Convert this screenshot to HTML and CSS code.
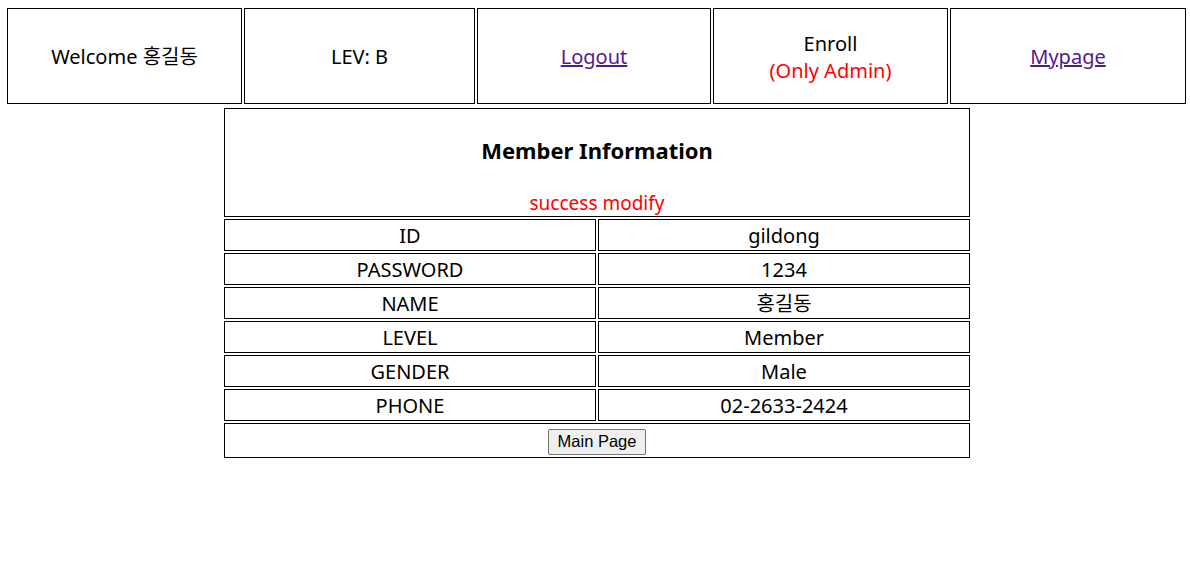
FILE: index.html
```html
<!DOCTYPE html>
<html lang="ko">
<head>
<meta charset="utf-8">
<title>Member Information</title>
<link rel="stylesheet" href="styles.css">
</head>
<body>
<div class="topbar">
  <div class="cell"><span>Welcome 홍길동</span></div>
  <div class="cell"><span>LEV: B</span></div>
  <div class="cell"><a href="#">Logout</a></div>
  <div class="cell stack"><span>Enroll</span><span class="red">(Only Admin)</span></div>
  <div class="cell"><a href="#">Mypage</a></div>
</div>
<div class="info">
  <div class="head">
    <h3 class="title">Member Information</h3>
    <span class="red msg">success modify</span>
  </div>
  <div class="c">ID</div><div class="c">gildong</div>
  <div class="c">PASSWORD</div><div class="c">1234</div>
  <div class="c">NAME</div><div class="c">홍길동</div>
  <div class="c">LEVEL</div><div class="c">Member</div>
  <div class="c">GENDER</div><div class="c">Male</div>
  <div class="c">PHONE</div><div class="c">02-2633-2424</div>
  <div class="foot"><button class="btn" type="button">Main Page</button></div>
</div>
</body>
</html>
```
FILE: styles.css
```css
html, body {
  margin: 0;
  padding: 0;
  background: #fff;
}
body {
  font-family: "Noto Sans", "Noto Sans CJK KR", sans-serif;
  font-size: 20px;
  color: #000;
}
.topbar {
  display: grid;
  grid-template-columns: 235px 231px 234px 235px 236px;
  column-gap: 2px;
  margin: 8px 0 0 7px;
  height: 96px;
}
.cell {
  border: 1px solid #000;
  display: flex;
  flex-direction: column;
  align-items: center;
  justify-content: center;
  line-height: 27px;
  padding-top: 1px;
}
.cell a {
  color: #551a8b;
}
.red {
  color: #ff0000;
}
.info {
  display: grid;
  grid-template-columns: 372px 372px;
  column-gap: 2px;
  row-gap: 2px;
  width: 746px;
  margin: 4px 0 0 224px;
}
.head {
  grid-column: 1 / 3;
  border: 1px solid #000;
  height: 107px;
  display: flex;
  flex-direction: column;
  align-items: center;
}
.title {
  margin: 26px 0 0 0;
  font-size: 22px;
  font-weight: bold;
  line-height: 30px;
}
.msg {
  margin-top: 25px;
  font-size: 19px;
  line-height: 27px;
}
.c {
  border: 1px solid #000;
  height: 30px;
  line-height: 31px;
  text-align: center;
}
.foot {
  grid-column: 1 / 3;
  border: 1px solid #000;
  height: 33px;
  display: flex;
  justify-content: center;
  align-items: center;
}
.btn {
  font-family: "Liberation Sans", Arial, sans-serif;
  font-size: 16.5px;
  width: 98px;
  height: 26px;
  padding: 0 6px;
  background: #efefef;
  border: 1px solid #767676;
  border-radius: 2px;
  color: #000;
  margin-top: 2px;
}
```
